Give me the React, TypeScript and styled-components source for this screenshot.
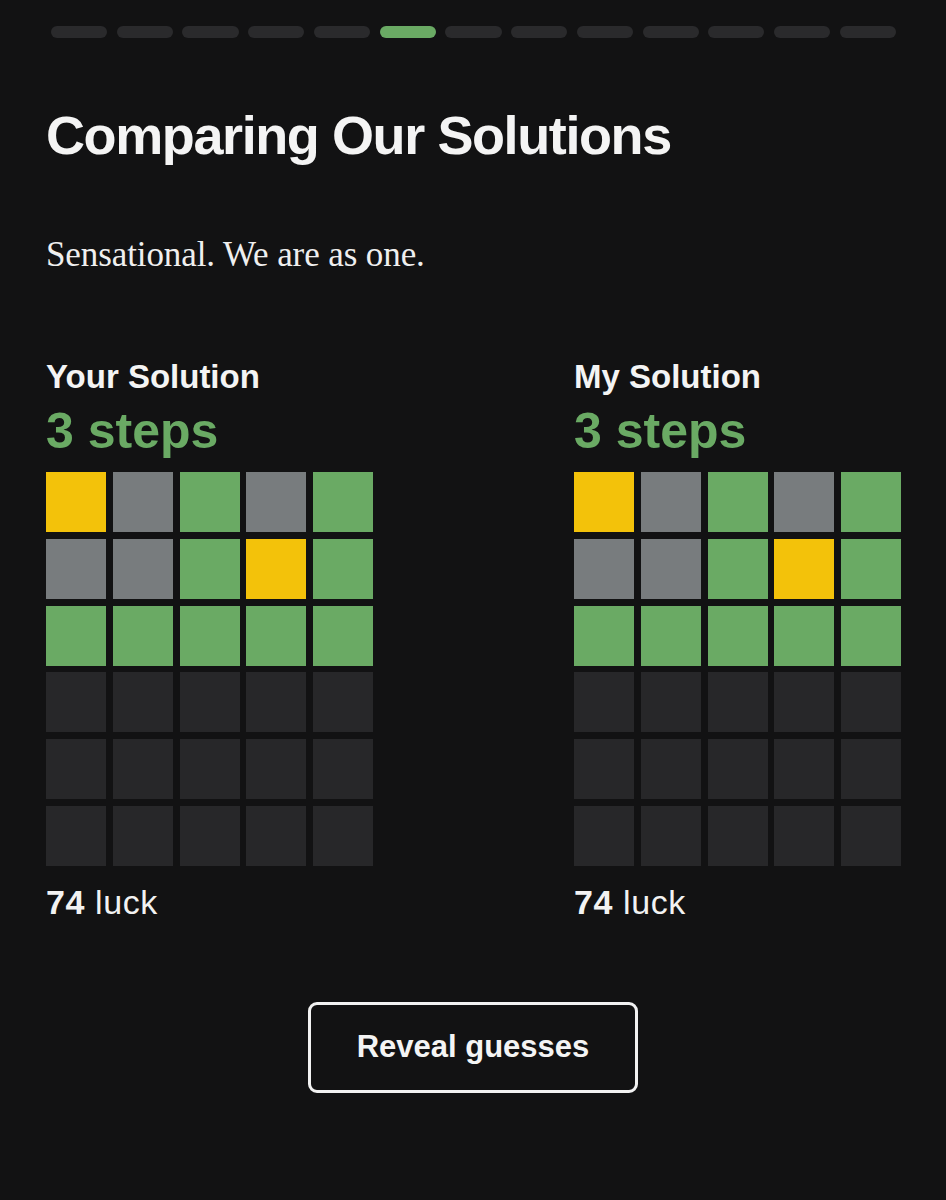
import React from "react";
import styled, { createGlobalStyle } from "styled-components";

const GlobalStyle = createGlobalStyle`
  html, body {
    margin: 0;
    padding: 0;
    background: #121213;
  }
  body {
    font-family: "Liberation Sans", Arial, sans-serif;
    color: #f2f2f2;
  }
`;

const Page = styled.div`
  width: 946px;
  height: 1200px;
  box-sizing: border-box;
  padding: 26px 45px 0 46px;
  background: #121213;
  display: flex;
  flex-direction: column;
`;

const Progress = styled.div`
  display: flex;
  gap: 9.6px;
  padding: 0 5px;
`;

const Segment = styled.div<{ $active?: boolean }>`
  flex: 1;
  height: 12px;
  border-radius: 6px;
  background: ${(p) => (p.$active ? "#6aaa64" : "#2a2a2c")};
`;

const Title = styled.h1`
  margin: 65px 0 0;
  font-family: "Liberation Sans", Arial, sans-serif;
  font-weight: 700;
  font-size: 54px;
  line-height: 1.2;
  letter-spacing: -1.4px;
  color: #f4f4f4;
`;

const Subtitle = styled.p`
  margin: 66px 0 0;
  font-family: "Liberation Serif", "Times New Roman", serif;
  font-weight: 400;
  font-size: 35px;
  line-height: 1.2;
  letter-spacing: -0.1px;
  color: #efefef;
`;

const Columns = styled.div`
  display: flex;
  justify-content: space-between;
  margin-top: 81px;
`;

const Column = styled.div`
  display: flex;
  flex-direction: column;
  width: 327px;
`;

const Label = styled.div`
  font-weight: 700;
  font-size: 33px;
  line-height: 1.2;
  color: #f4f4f4;
`;

const Steps = styled.div`
  margin-top: 5px;
  font-weight: 700;
  font-size: 50px;
  line-height: 1.2;
  color: #6aaa64;
`;

const Board = styled.div`
  margin-top: 11px;
  display: grid;
  grid-template-columns: repeat(5, 60px);
  grid-auto-rows: 60px;
  gap: 6.7px 6.75px;
`;

type CellKind = "y" | "g" | "x" | "e";

const cellColors: Record<CellKind, string> = {
  y: "#f3c20a",
  g: "#6aaa64",
  x: "#787c7e",
  e: "#272729",
};

const Cell = styled.div<{ $kind: CellKind }>`
  background: ${(p) => cellColors[p.$kind]};
`;

const Luck = styled.div`
  margin-top: 16px;
  font-size: 34px;
  line-height: 1.2;
  font-weight: 400;
  letter-spacing: 0.6px;
  color: #f2f2f2;
  b {
    font-weight: 700;
  }
`;

const ButtonRow = styled.div`
  display: flex;
  justify-content: center;
  margin-top: 79px;
  padding-right: 1px;
`;

const Button = styled.button`
  width: 330px;
  height: 91px;
  box-sizing: border-box;
  border: 3px solid #f2f2f2;
  border-radius: 9px;
  background: #121213;
  color: #f4f4f4;
  font-family: "Liberation Sans", Arial, sans-serif;
  font-weight: 700;
  font-size: 31px;
  cursor: pointer;
`;

const rows: CellKind[][] = [
  ["y", "x", "g", "x", "g"],
  ["x", "x", "g", "y", "g"],
  ["g", "g", "g", "g", "g"],
  ["e", "e", "e", "e", "e"],
  ["e", "e", "e", "e", "e"],
  ["e", "e", "e", "e", "e"],
];

const Solution: React.FC<{ label: string }> = ({ label }) => (
  <Column>
    <Label>{label}</Label>
    <Steps>3 steps</Steps>
    <Board>
      {rows.flatMap((row, r) =>
        row.map((k, c) => <Cell key={`${r}-${c}`} $kind={k} />)
      )}
    </Board>
    <Luck>
      <b>74</b> luck
    </Luck>
  </Column>
);

export default function App() {
  return (
    <>
      <GlobalStyle />
      <Page>
        <Progress>
          {Array.from({ length: 13 }).map((_, i) => (
            <Segment key={i} $active={i === 5} />
          ))}
        </Progress>
        <Title>Comparing Our Solutions</Title>
        <Subtitle>Sensational. We are as one.</Subtitle>
        <Columns>
          <Solution label="Your Solution" />
          <Solution label="My Solution" />
        </Columns>
        <ButtonRow>
          <Button>Reveal guesses</Button>
        </ButtonRow>
      </Page>
    </>
  );
}
